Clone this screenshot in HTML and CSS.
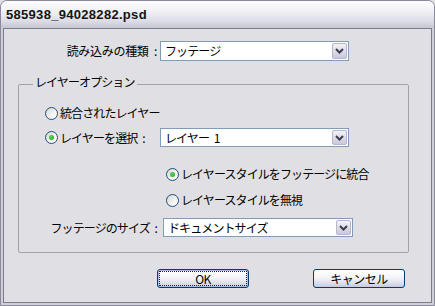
FILE: index.html
```html
<!DOCTYPE html>
<html lang="ja">
<head>
    <meta charset="UTF-8">
    <title>585938_94028282.psd</title>
    <link rel="stylesheet" href="styles.css">
</head>
<body>
    <div class="window">
        <div class="titlebar">585938_94028282.psd</div>

        <div class="client">
            <!-- Import type -->
            <div class="type-row">
                <span class="field-label">読み込みの種類 :</span>
                <div class="combo combo-wide">
                    <span class="combo-text">フッテージ</span>
                    <span class="combo-btn"><svg width="9" height="6" viewBox="0 0 9 6"><polyline points="1,1 4.5,4.5 8,1" fill="none" stroke="#3c3c50" stroke-width="2"/></svg></span>
                </div>
            </div>

            <!-- Layer options group -->
            <div class="group">
                <div class="group-title">レイヤーオプション</div>

                <div class="radio-row first-radio">
                    <span class="radio"></span>
                    <span>統合されたレイヤー</span>
                </div>

                <div class="select-row">
                    <div class="radio-label">
                        <span class="radio checked"></span>
                        <span>レイヤーを選択 :</span>
                    </div>
                    <div class="combo combo-layer">
                        <span class="combo-text">レイヤー 1</span>
                        <span class="combo-btn"><svg width="9" height="6" viewBox="0 0 9 6"><polyline points="1,1 4.5,4.5 8,1" fill="none" stroke="#3c3c50" stroke-width="2"/></svg></span>
                    </div>
                </div>

                <div class="radio-row sub-radio">
                    <span class="radio checked"></span>
                    <span>レイヤースタイルをフッテージに統合</span>
                </div>
                <div class="radio-row sub-radio second">
                    <span class="radio"></span>
                    <span>レイヤースタイルを無視</span>
                </div>

                <div class="size-row">
                    <span class="size-label">フッテージのサイズ :</span>
                    <div class="combo combo-size">
                        <span class="combo-text">ドキュメントサイズ</span>
                        <span class="combo-btn"><svg width="9" height="6" viewBox="0 0 9 6"><polyline points="1,1 4.5,4.5 8,1" fill="none" stroke="#3c3c50" stroke-width="2"/></svg></span>
                    </div>
                </div>
            </div>

            <!-- Dialog buttons -->
            <div class="buttons">
                <button class="btn btn-default"><span class="focus">OK</span></button>
                <button class="btn">キャンセル</button>
            </div>
        </div>
    </div>
</body>
</html>
```

FILE: styles.css
```css
* {
    box-sizing: border-box;
}

body {
    margin: 0;
    font-family: "Noto Sans CJK JP", "DejaVu Sans", sans-serif;
    font-size: 12px;
    letter-spacing: -0.9px;
    word-spacing: 3px;
    color: #000;
    background-color: #e0dfe3;
}

.window {
    width: 435px;
    height: 306px;
    display: flex;
    flex-direction: column;
    border: 1px solid #8a8a9c;
    border-radius: 7px 7px 0 0;
    background-color: #cfcfd9;
    overflow: hidden;
}

.titlebar {
    height: 27px;
    padding: 6px 0 0 5px;
    font-family: "Liberation Sans", Arial, sans-serif;
    font-weight: bold;
    font-size: 13px;
    letter-spacing: 0.3px;
    color: #141414;
    background: linear-gradient(#fdfdfe, #f2f2f6 35%, #dcdce6 75%, #c6c6d4);
}

.client {
    flex: 1;
    margin: 0 2px 2px 2px;
    border: 1px solid #7c7c8e;
    background-color: #e0dfe3;
}

.type-row {
    display: flex;
    align-items: center;
    margin-top: 12px;
}

.field-label {
    width: 153px;
    margin-right: 3px;
    text-align: right;
    line-height: 14px;
    letter-spacing: -0.3px;
}

.combo {
    display: flex;
    align-items: center;
    height: 19px;
    border: 1px solid #7f9db9;
    background-color: #fff;
}

.combo-wide {
    width: 189px;
    height: 20px;
}

.combo-layer {
    width: 189px;
}

.combo-size {
    width: 190px;
}

.combo-text {
    padding-left: 4px;
    line-height: 14px;
}

.combo-btn {
    display: flex;
    align-items: center;
    justify-content: center;
    width: 15px;
    height: calc(100% - 2px);
    margin-left: auto;
    margin-right: 1px;
    border: 1px solid #b7b7c9;
    border-radius: 2px;
    background: linear-gradient(#f2f2f7, #d9d9e4 60%, #c9c9d8);
}

.group {
    width: 391px;
    margin: 23px 0 0 14px;
    padding-bottom: 15px;
    border: 1px solid #a2a2a8;
    border-radius: 2px;
}

.group-title {
    width: fit-content;
    margin: -10px 0 0 14px;
    padding: 0 2px;
    line-height: 14px;
    background-color: #e0dfe3;
}

.radio-row {
    display: flex;
    align-items: center;
    height: 16px;
    line-height: 14px;
}

.first-radio {
    margin: 16px 0 0 26px;
}

.sub-radio {
    margin: 19px 0 0 147px;
}

.sub-radio.second {
    margin-top: 10px;
}

.radio {
    display: flex;
    align-items: center;
    justify-content: center;
    flex-shrink: 0;
    width: 13px;
    height: 13px;
    margin-right: 2px;
    border: 1px solid #1c5180;
    border-radius: 50%;
    background: linear-gradient(135deg, #d4d4ce, #f4f4f2 60%, #fff);
}

.radio.checked::after {
    content: "";
    width: 5px;
    height: 5px;
    border-radius: 50%;
    background: radial-gradient(circle at 40% 40%, #5ed35e, #21a121);
}

.select-row {
    display: flex;
    align-items: center;
    margin: 7px 0 0 26px;
}

.radio-label {
    display: flex;
    align-items: center;
    width: 115px;
    line-height: 14px;
}

.size-row {
    display: flex;
    align-items: center;
    margin-top: 10px;
}

.size-label {
    width: 138px;
    margin-right: 6px;
    text-align: right;
    line-height: 14px;
}

.buttons {
    display: flex;
    gap: 64px;
    margin-top: 16px;
    padding-left: 153px;
}

.btn {
    width: 92px;
    height: 19px;
    padding: 0;
    font-family: "Noto Sans CJK JP", "DejaVu Sans", sans-serif;
    font-size: 12px;
    letter-spacing: -0.5px;
    line-height: 14px;
    color: #000;
    border: 1px solid #003c74;
    border-radius: 3px;
    background: linear-gradient(#ffffff, #f4f4f8 45%, #dcdce8 80%, #c8c8da);
}

.btn-default {
    padding: 1px;
    box-shadow: inset 0 0 0 1px #a8bee6;
}

.focus {
    display: block;
    height: 100%;
    border: 1px dotted #222;
    line-height: 13px;
}
```
